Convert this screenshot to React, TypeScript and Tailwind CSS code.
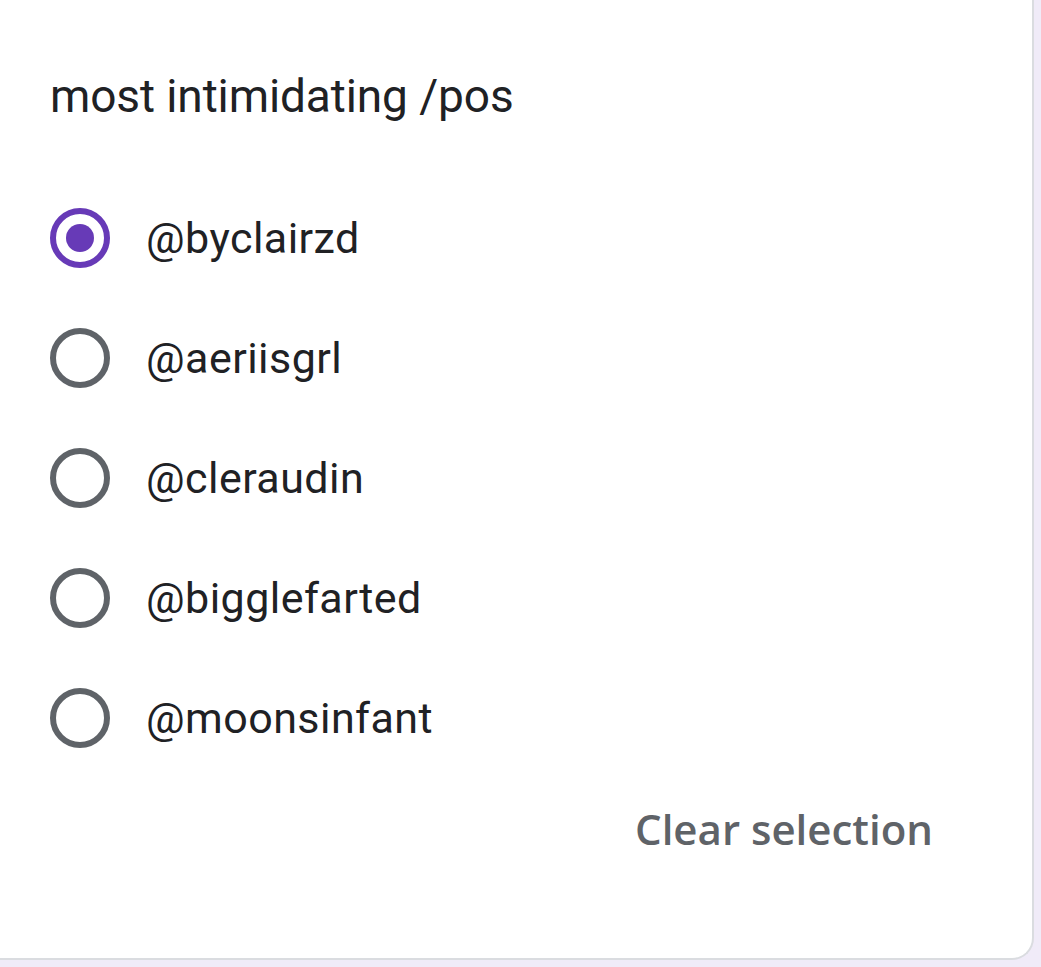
const OPTIONS = ["@byclairzd", "@aeriisgrl", "@cleraudin", "@bigglefarted", "@moonsinfant"];

function Radio({ checked }: { checked: boolean }) {
  return (
    <span
      className={`flex h-[60px] w-[60px] shrink-0 items-center justify-center rounded-full border-[6px] ${
        checked ? "border-[#673ab7]" : "border-[#5f6368]"
      }`}
    >
      {checked && <span className="h-[28px] w-[28px] rounded-full bg-[#673ab7]" />}
    </span>
  );
}

export default function App() {
  return (
    <div className="h-[967px] w-[1041px] overflow-hidden bg-[#f0ebf8]">
      <div className="flex h-[960px] w-[1034px] flex-col rounded-br-[22px] border-b-2 border-r-2 border-[#dadce0] bg-white pl-[50px] pr-[99px] pt-[68px]">
        <h2 className="font-['Roboto',sans-serif] text-[46px] font-normal leading-[56px] tracking-[-0.1px] text-[#202124]">
          most intimidating /pos
        </h2>

        <div className="mt-[54px] flex flex-col">
          {OPTIONS.map((opt, i) => (
            <label key={opt} className="flex h-[120px] items-center gap-[36px]">
              <Radio checked={i === 0} />
              <span className="font-['Roboto',sans-serif] text-[43px] leading-[50px] tracking-[0.45px] text-[#202124]">
                {opt}
              </span>
            </label>
          ))}
        </div>

        <div className="mt-[26px] flex justify-end">
          <span className="font-['Open_Sans',sans-serif] text-[42px] font-semibold leading-[50px] text-[#5f6368]">
            Clear selection
          </span>
        </div>
      </div>
    </div>
  );
}
